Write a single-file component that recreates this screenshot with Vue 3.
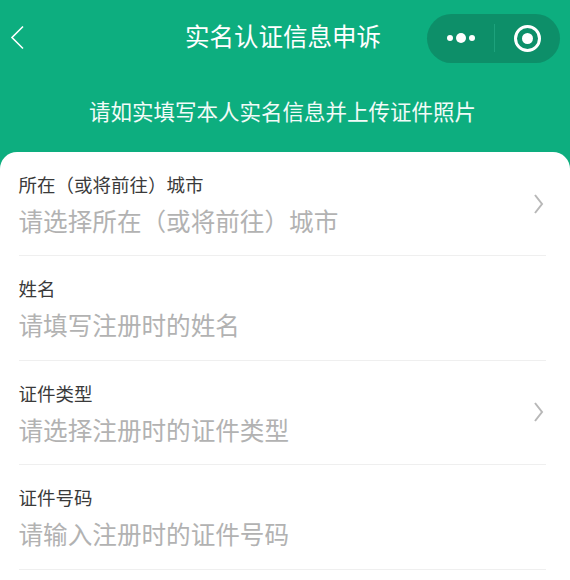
<script setup>
const fields = [
  { label: '所在（或将前往）城市', hint: '请选择所在（或将前往）城市', arrow: true },
  { label: '姓名', hint: '请填写注册时的姓名', arrow: false },
  { label: '证件类型', hint: '请选择注册时的证件类型', arrow: true },
  { label: '证件号码', hint: '请输入注册时的证件号码', arrow: false }
]
</script>

<template>
  <div class="page">
    <header class="top">
      <div class="nav">
        <svg class="back" width="16" height="26" viewBox="0 0 16 26">
          <path d="M14 1.5 L3 12.5 L14 23.5" fill="none" stroke="#fff" stroke-width="1.6" />
        </svg>
        <h1 class="title">实名认证信息申诉</h1>
        <div class="capsule">
          <div class="dots">
            <span class="dot"></span>
            <span class="dot big"></span>
            <span class="dot"></span>
          </div>
          <span class="sep"></span>
          <div class="target"><span></span></div>
        </div>
      </div>
      <p class="sub">请如实填写本人实名信息并上传证件照片</p>
    </header>

    <main class="card">
      <div class="row" v-for="f in fields" :key="f.label">
        <div class="text">
          <div class="label">{{ f.label }}</div>
          <div class="hint">{{ f.hint }}</div>
        </div>
        <svg v-if="f.arrow" class="arrow" width="12" height="22" viewBox="0 0 12 22">
          <path d="M2 2 L9 11 L2 20" fill="none" stroke="#b8b8b8" stroke-width="2" />
        </svg>
      </div>
    </main>
  </div>
</template>

<style>
html, body {
  margin: 0;
  background: #fff;
}
</style>

<style scoped>
.page {
  width: 570px;
  height: 580px;
  overflow: hidden;
  background: #0dae7f;
  font-family: "Liberation Sans", "Noto Sans CJK SC", sans-serif;
}

.top {
  height: 152px;
  color: #fff;
}

.nav {
  display: flex;
  align-items: center;
  height: 50px;
  padding: 13px 10px 0 9px;
}

.back {
  flex: none;
}

.title {
  flex: 1;
  margin: 0 0 0 160px;
  font-size: 24.5px;
  font-weight: 400;
  line-height: 50px;
  white-space: nowrap;
}

.capsule {
  display: flex;
  align-items: center;
  width: 133px;
  height: 49px;
  border-radius: 25px;
  background: #0d8f69;
}

.dots {
  display: flex;
  align-items: center;
  justify-content: center;
  gap: 3px;
  width: 67px;
}

.dot {
  width: 6px;
  height: 6px;
  border-radius: 50%;
  background: #fff;
}

.dot.big {
  width: 10px;
  height: 10px;
}

.sep {
  width: 1px;
  height: 28px;
  background: #1da27c;
}

.target {
  display: flex;
  align-items: center;
  justify-content: center;
  box-sizing: border-box;
  width: 27px;
  height: 27px;
  margin-left: 19px;
  border: 3px solid #fff;
  border-radius: 50%;
}

.target span {
  width: 11px;
  height: 11px;
  border-radius: 50%;
  background: #fff;
}

.sub {
  margin: 35px 5px 0 0;
  font-size: 21.5px;
  line-height: 30px;
  text-align: center;
  color: #f2fbf8;
  white-space: nowrap;
}

.card {
  height: 428px;
  padding: 0 24px 0 18.5px;
  border-radius: 17px 17px 0 0;
  background: #fff;
}

.row {
  display: flex;
  align-items: center;
  justify-content: space-between;
  box-sizing: border-box;
  height: 104.5px;
  padding-top: 19px;
  border-bottom: 1px solid #efefef;
}

.row:first-child {
  height: 104px;
}

.text {
  align-self: flex-start;
}

.label {
  font-size: 18.5px;
  line-height: 30px;
  color: #3a3a3a;
}

.hint {
  margin-top: 4px;
  font-size: 24.6px;
  line-height: 36px;
  color: #b2b2b2;
}

.arrow {
  margin-top: -19px;
  margin-right: 1px;
}
</style>
